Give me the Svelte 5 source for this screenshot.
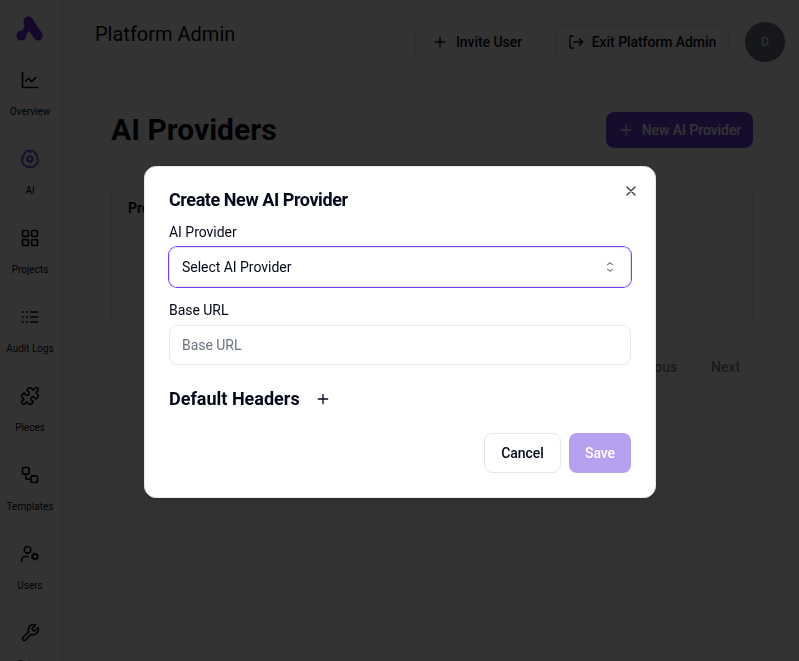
<script>
  const nav = [
    { label: 'Overview', paths: ['M3 3v18h18', 'm19 9-5 5-4-4-3 3'] },
    {
      label: 'AI',
      active: true,
      paths: [
        'M12 4.5a2.5 2.5 0 0 0-4.96-.46 2.5 2.5 0 0 0-1.98 3 2.5 2.5 0 0 0-1.32 4.24 3 3 0 0 0 .34 5.58 2.5 2.5 0 0 0 2.96 3.08A2.5 2.5 0 0 0 12 19.5a2.5 2.5 0 0 0 4.96.44 2.5 2.5 0 0 0 2.96-3.08 3 3 0 0 0 .34-5.58 2.5 2.5 0 0 0-1.32-4.24 2.5 2.5 0 0 0-1.98-3A2.5 2.5 0 0 0 12 4.5',
        'M15 12a3 3 0 1 1-6 0 3 3 0 0 1 6 0Z',
        'm15.7 10.4-.9.4M9.2 13.2l-.9.4M13.6 15.7l-.4-.9M10.8 9.2l-.4-.9M15.7 13.5l-.9-.4M9.2 10.9l-.9-.4M10.5 15.7l.4-.9M13.1 9.2l.4-.9'
      ]
    },
    {
      label: 'Projects',
      paths: [
        'M4 3h5a1 1 0 0 1 1 1v5a1 1 0 0 1-1 1H4a1 1 0 0 1-1-1V4a1 1 0 0 1 1-1Z',
        'M15 3h5a1 1 0 0 1 1 1v5a1 1 0 0 1-1 1h-5a1 1 0 0 1-1-1V4a1 1 0 0 1 1-1Z',
        'M15 14h5a1 1 0 0 1 1 1v5a1 1 0 0 1-1 1h-5a1 1 0 0 1-1-1v-5a1 1 0 0 1 1-1Z',
        'M4 14h5a1 1 0 0 1 1 1v5a1 1 0 0 1-1 1H4a1 1 0 0 1-1-1v-5a1 1 0 0 1 1-1Z'
      ]
    },
    { label: 'Audit Logs', paths: ['M13 12h8M13 18h8M13 6h8M3 12h1M3 18h1M3 6h1M8 12h1M8 18h1M8 6h1'] },
    {
      label: 'Pieces',
      paths: [
        'M19.439 7.85c-.049.322.059.648.289.878l1.568 1.568c.47.47.706 1.087.706 1.704s-.235 1.233-.706 1.704l-1.611 1.611a.98.98 0 0 1-.837.276c-.47-.07-.802-.48-.968-.925a2.501 2.501 0 1 0-3.214 3.214c.446.166.855.497.925.968a.979.979 0 0 1-.276.837l-1.61 1.61a2.404 2.404 0 0 1-1.705.707 2.402 2.402 0 0 1-1.704-.706l-1.568-1.568a1.026 1.026 0 0 0-.877-.29c-.493.074-.84.504-1.02.968a2.5 2.5 0 1 1-3.237-3.237c.464-.18.894-.527.967-1.02a1.026 1.026 0 0 0-.289-.877l-1.568-1.568A2.402 2.402 0 0 1 1.998 12c0-.617.236-1.234.706-1.704L4.23 8.77c.24-.24.581-.353.917-.303.515.077.877.528 1.073 1.01a2.5 2.5 0 1 0 3.259-3.259c-.482-.196-.933-.558-1.01-1.073-.05-.336.062-.676.303-.917l1.525-1.525A2.402 2.402 0 0 1 12 1.998c.617 0 1.234.236 1.704.706l1.568 1.568c.23.23.556.338.877.29.493-.074.84-.504 1.02-.968a2.5 2.5 0 1 1 3.237 3.237c-.464.18-.894.527-.967 1.02Z'
      ]
    },
    {
      label: 'Templates',
      paths: [
        'M5 3h4a2 2 0 0 1 2 2v4a2 2 0 0 1-2 2H5a2 2 0 0 1-2-2V5a2 2 0 0 1 2-2Z',
        'M7 11v4a2 2 0 0 0 2 2h4',
        'M15 13h4a2 2 0 0 1 2 2v4a2 2 0 0 1-2 2h-4a2 2 0 0 1-2-2v-4a2 2 0 0 1 2-2Z'
      ]
    },
    {
      label: 'Users',
      paths: [
        'M21 15a3 3 0 1 1-6 0 3 3 0 0 1 6 0Z',
        'M13 7a4 4 0 1 1-8 0 4 4 0 0 1 8 0Z',
        'M10 15H6a4 4 0 0 0-4 4v2',
        'm21.7 16.4-.9-.3M15.2 13.9l-.9-.3M16.6 18.7l.3-.9M19.1 12.2l.3-.9M19.6 18.7l-.4-1M16.8 12.3l-.4-1M14.3 16.6l1-.4M20.7 13.8l1-.4'
      ]
    },
    {
      label: 'Setup',
      paths: [
        'M14.7 6.3a1 1 0 0 0 0 1.4l1.6 1.6a1 1 0 0 0 1.4 0l3.77-3.77a6 6 0 0 1-7.94 7.94l-6.91 6.91a2.12 2.12 0 0 1-3-3l6.91-6.91a6 6 0 0 1 7.94-7.94l-3.76 3.76z'
      ]
    }
  ];
</script>

{#snippet plus()}
  <svg class="icon plus" viewBox="0 0 24 24"><path d="M5 12h14M12 5v14" /></svg>
{/snippet}

<div class="page">
  <aside>
    <svg class="logo" viewBox="0 0 28 26">
      <path d="M12.4 5.3 22 19.7" stroke-width="9.6" />
      <path d="M12.4 5.3 10.6 13.5 5.8 19.7" stroke-width="6" />
      <circle cx="12.4" cy="5.3" r="4.8" />
      <circle cx="5.3" cy="19.7" r="4.9" />
    </svg>
    <nav>
      {#each nav as item}
        <a href="#top" class:active={item.active}>
          <span class="tile">
            <svg class="icon" viewBox="0 0 24 24">
              {#each item.paths as d}<path {d} />{/each}
            </svg>
          </span>
          <span class="label">{item.label}</span>
        </a>
      {/each}
    </nav>
  </aside>

  <main>
    <header>
      <div class="title">Platform Admin</div>
      <div class="actions">
        <button class="btn tall invite">{@render plus()}Invite User</button>
        <button class="btn exit">
          <svg class="icon" viewBox="0 0 24 24"><path d="M8 3H5a2 2 0 0 0-2 2v14a2 2 0 0 0 2 2h3M9 12h13M17 7l5 5-5 5" /></svg>
          Exit Platform Admin
        </button>
        <span class="avatar">D</span>
      </div>
    </header>

    <section>
      <div class="heading">
        <h1>AI Providers</h1>
        <button class="btn primary">{@render plus()}New AI Provider</button>
      </div>
      <div class="table">
        <div class="thead">Provider</div>
      </div>
      <div class="pager">
        <button class="btn faded">Previous</button>
        <button class="btn faded">Next</button>
      </div>
    </section>
  </main>
</div>

<div class="overlay">
  <div class="dialog" role="dialog" aria-label="Create New AI Provider">
    <div class="top">
      <h2>Create New AI Provider</h2>
      <svg class="icon close" viewBox="0 0 24 24"><path d="M18 6 6 18M6 6l12 12" /></svg>
    </div>
    <div class="field-label">AI Provider</div>
    <div class="field select">
      <span>Select AI Provider</span>
      <svg class="icon" viewBox="0 0 16 16"><path d="M5.5 5.7 8 3.7l2.5 2M5.5 10.3 8 12.3l2.5-2" /></svg>
    </div>
    <div class="field-label second">Base URL</div>
    <div class="field placeholder">Base URL</div>
    <div class="defaults"><h3>Default Headers</h3>{@render plus()}</div>
    <div class="footer">
      <button class="btn tall cancel">Cancel</button>
      <button class="btn tall save">Save</button>
    </div>
  </div>
</div>

<style>
  :global(body) { margin: 0; overflow: hidden; }
  .page, .overlay { font-family: Roboto, sans-serif; color: #020817; box-sizing: border-box; }
  .page *, .overlay * { box-sizing: border-box; }
  .page { display: flex; width: 799px; height: 661px; overflow: hidden; background: #fff; }
  .icon { width: 16px; height: 16px; flex: none; fill: none; stroke: currentColor; stroke-width: 2; stroke-linecap: round; stroke-linejoin: round; }
  aside { width: 63px; flex: none; border-right: 1px solid #e5e7eb; padding-top: 16px; }
  .logo { display: block; width: 28px; height: 26px; margin-left: 16px; fill: #6e29e0; stroke: #6e29e0; stroke-linecap: round; stroke-linejoin: round; }
  .logo path { fill: none; }
  .logo circle { stroke: none; }
  nav { display: flex; flex-direction: column; gap: 20px; padding: 18px 2px 0 0; }
  nav a { height: 59px; display: flex; flex-direction: column; align-items: center; color: inherit; text-decoration: none; }
  .tile { width: 40px; height: 40px; display: grid; place-items: center; border-radius: 8px; }
  .tile .icon { width: 20px; height: 20px; }
  .active .tile { background: #fafafa; color: #6e41e2; }
  .label { margin-top: 5px; font-size: 10px; line-height: 15px; white-space: nowrap; }
  main { flex: 1; min-width: 0; }
  header { display: flex; justify-content: space-between; padding: 22px 14px 0 32px; }
  .title { font-size: 20px; line-height: 24px; }
  .actions { display: flex; align-items: center; gap: 16px; }
  .btn { height: 36px; padding: 0 12px; display: inline-flex; align-items: center; justify-content: center; gap: 8px; border: 1px solid #e5e7eb; border-radius: 8px; background: #fff; color: inherit; font: 500 14px/20px Roboto, sans-serif; letter-spacing: -.06px; white-space: nowrap; }
  .tall { height: 40px; padding: 0 16px; }
  .invite { width: 124px; }
  .exit { width: 174px; }
  .avatar { width: 40px; height: 40px; display: grid; place-items: center; border-radius: 50%; background: #6b7280; color: #fff; font-size: 12px; }
  section { padding: 50px 46px 0 48px; }
  .heading { display: flex; justify-content: space-between; align-items: center; }
  h1, h2, h3 { margin: 0; }
  h1 { font-size: 30px; line-height: 36px; font-weight: 700; }
  .primary { width: 147px; background: #6e41e2; border-color: #6e41e2; color: #fff; }
  .table { margin-top: 32px; height: 153px; border: 1px solid #e5e7eb; border-radius: 12px; }
  .thead { height: 55px; padding: 0 16px; border-bottom: 1px solid #e5e7eb; font-size: 14px; line-height: 55px; font-weight: 700; }
  .pager { display: flex; justify-content: flex-end; gap: 8px; margin-top: 16px; }
  .faded { opacity: .5; }
  .overlay { position: fixed; inset: 0; background: rgba(0, 0, 0, .8); display: grid; place-items: start center; padding: 166px 0 0 1px; }
  .dialog { width: 512px; height: 332px; padding: 24px; border: 1px solid #e5e7eb; border-radius: 12px; background: #fff; box-shadow: 0 10px 15px -3px rgba(0,0,0,.1), 0 4px 6px -4px rgba(0,0,0,.1); }
  .top { display: flex; justify-content: space-between; }
  h2 { font-size: 18px; line-height: 18px; font-weight: 700; letter-spacing: -.43px; }
  .close { margin: -8px -8px 0 0; opacity: .8; }
  .field-label { margin-top: 16px; font-size: 14px; line-height: 14px; font-weight: 400; letter-spacing: -.03px; }
  .field { height: 40px; margin-top: 8px; padding: 0 12px; display: flex; align-items: center; justify-content: space-between; border: 1px solid #e5e7eb; border-radius: 8px; font-size: 14px; letter-spacing: -.03px; }
  .select { box-shadow: 0 0 0 1px #7c3aed; }
  .select .icon { stroke-width: 1.1; opacity: .5; }
  .placeholder { color: #6b7280; }
  .defaults { display: flex; align-items: center; gap: 15px; margin-top: 20px; }
  h3 { font-size: 18px; line-height: 28px; font-weight: 700; }
  .footer { display: flex; justify-content: flex-end; gap: 8px; margin-top: 20px; }
  .cancel { width: 77px; }
  .save { width: 62px; border: 0; background: #b6a0f0; color: #fff; }
</style>
